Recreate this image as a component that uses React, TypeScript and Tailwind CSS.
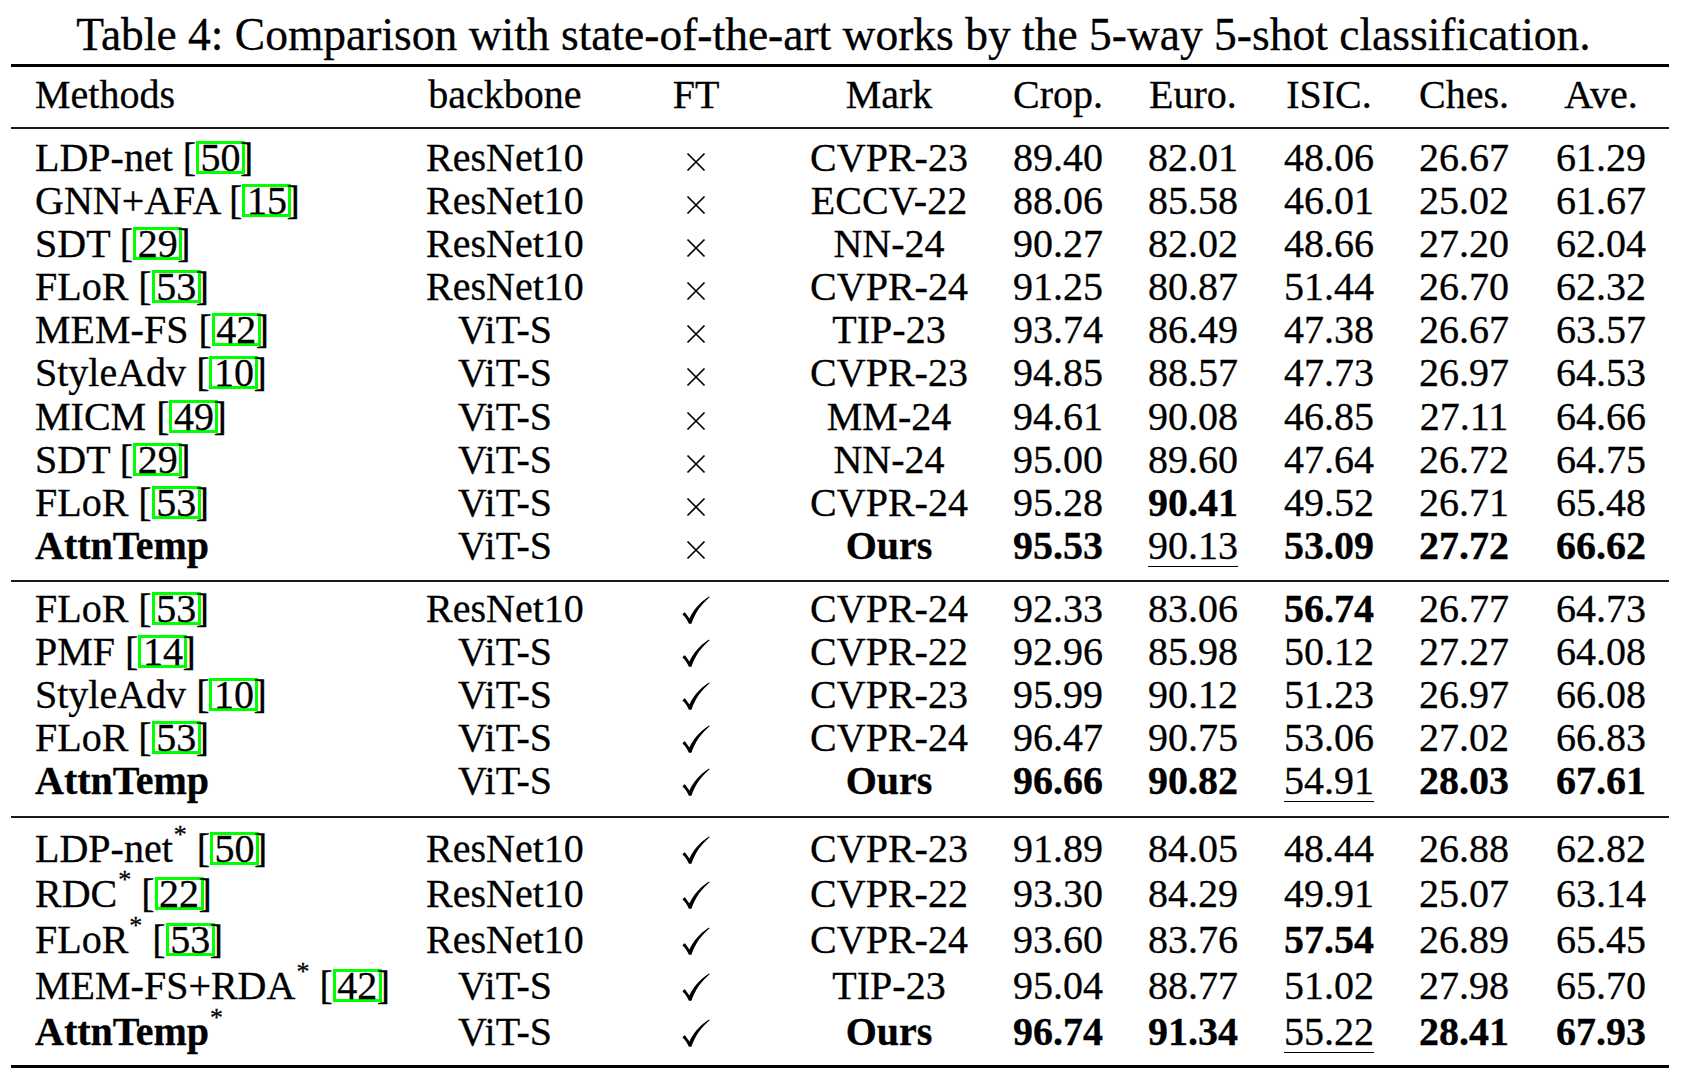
import React from 'react';

type Row = {
  name: string;
  cite?: string;
  star?: boolean;
  bold?: boolean;
  backbone: string;
  ft: boolean;
  mark: string;
  vals: string[];
};

// "b:" = bold cell, "u:" = underlined cell
const sections: Row[][] = [
  [
    { name: 'LDP-net', cite: '50', backbone: 'ResNet10', ft: false, mark: 'CVPR-23', vals: ['89.40', '82.01', '48.06', '26.67', '61.29'] },
    { name: 'GNN+AFA', cite: '15', backbone: 'ResNet10', ft: false, mark: 'ECCV-22', vals: ['88.06', '85.58', '46.01', '25.02', '61.67'] },
    { name: 'SDT', cite: '29', backbone: 'ResNet10', ft: false, mark: 'NN-24', vals: ['90.27', '82.02', '48.66', '27.20', '62.04'] },
    { name: 'FLoR', cite: '53', backbone: 'ResNet10', ft: false, mark: 'CVPR-24', vals: ['91.25', '80.87', '51.44', '26.70', '62.32'] },
    { name: 'MEM-FS', cite: '42', backbone: 'ViT-S', ft: false, mark: 'TIP-23', vals: ['93.74', '86.49', '47.38', '26.67', '63.57'] },
    { name: 'StyleAdv', cite: '10', backbone: 'ViT-S', ft: false, mark: 'CVPR-23', vals: ['94.85', '88.57', '47.73', '26.97', '64.53'] },
    { name: 'MICM', cite: '49', backbone: 'ViT-S', ft: false, mark: 'MM-24', vals: ['94.61', '90.08', '46.85', '27.11', '64.66'] },
    { name: 'SDT', cite: '29', backbone: 'ViT-S', ft: false, mark: 'NN-24', vals: ['95.00', '89.60', '47.64', '26.72', '64.75'] },
    { name: 'FLoR', cite: '53', backbone: 'ViT-S', ft: false, mark: 'CVPR-24', vals: ['95.28', 'b:90.41', '49.52', '26.71', '65.48'] },
    { name: 'AttnTemp', bold: true, backbone: 'ViT-S', ft: false, mark: 'b:Ours', vals: ['b:95.53', 'u:90.13', 'b:53.09', 'b:27.72', 'b:66.62'] },
  ],
  [
    { name: 'FLoR', cite: '53', backbone: 'ResNet10', ft: true, mark: 'CVPR-24', vals: ['92.33', '83.06', 'b:56.74', '26.77', '64.73'] },
    { name: 'PMF', cite: '14', backbone: 'ViT-S', ft: true, mark: 'CVPR-22', vals: ['92.96', '85.98', '50.12', '27.27', '64.08'] },
    { name: 'StyleAdv', cite: '10', backbone: 'ViT-S', ft: true, mark: 'CVPR-23', vals: ['95.99', '90.12', '51.23', '26.97', '66.08'] },
    { name: 'FLoR', cite: '53', backbone: 'ViT-S', ft: true, mark: 'CVPR-24', vals: ['96.47', '90.75', '53.06', '27.02', '66.83'] },
    { name: 'AttnTemp', bold: true, backbone: 'ViT-S', ft: true, mark: 'b:Ours', vals: ['b:96.66', 'b:90.82', 'u:54.91', 'b:28.03', 'b:67.61'] },
  ],
  [
    { name: 'LDP-net', star: true, cite: '50', backbone: 'ResNet10', ft: true, mark: 'CVPR-23', vals: ['91.89', '84.05', '48.44', '26.88', '62.82'] },
    { name: 'RDC', star: true, cite: '22', backbone: 'ResNet10', ft: true, mark: 'CVPR-22', vals: ['93.30', '84.29', '49.91', '25.07', '63.14'] },
    { name: 'FLoR', star: true, cite: '53', backbone: 'ResNet10', ft: true, mark: 'CVPR-24', vals: ['93.60', '83.76', 'b:57.54', '26.89', '65.45'] },
    { name: 'MEM-FS+RDA', star: true, cite: '42', backbone: 'ViT-S', ft: true, mark: 'TIP-23', vals: ['95.04', '88.77', '51.02', '27.98', '65.70'] },
    { name: 'AttnTemp', star: true, bold: true, backbone: 'ViT-S', ft: true, mark: 'b:Ours', vals: ['b:96.74', 'b:91.34', 'u:55.22', 'b:28.41', 'b:67.93'] },
  ],
];

const cols = 'grid grid-cols-[399px_190px_192px_194px_144px_126px_146px_124px_150px] items-baseline whitespace-nowrap';

const Cite = ({ n }: { n: string }) => (
  <>
    [
    <span className="mr-[-5px] inline-block border-[3px] border-[#00ff00] px-[1.5px] leading-[27px]">{n}</span>]
  </>
);

const Check = () => (
  <svg viewBox="0 0 28 28" className="inline-block h-[28px] w-[28px] align-[-2px]">
    <path
      d="M0.5 18.4 C1.2 17.4 2 16.6 2.9 16.2 L7.4 22.4 C11 14.5 17 6.8 27 0.4 L27.6 1.2 C19.5 8 13.2 16.5 9.4 27.8 L6.9 27.8 C5.4 24.2 3.4 20.6 0.5 18.4 Z"
      fill="black"
    />
  </svg>
);

const Cross = () => (
  <svg viewBox="0 0 20 20" className="inline-block h-[20px] w-[20px] align-[-1px]">
    <path d="M1.5 1.5 L18.5 18.5 M18.5 1.5 L1.5 18.5" stroke="black" strokeWidth="1.7" fill="none" />
  </svg>
);

const Value = ({ v }: { v: string }) => {
  if (v.startsWith('b:')) return <span className="font-bold">{v.slice(2)}</span>;
  if (v.startsWith('u:'))
    return <span className="inline-block border-b-[1.5px] border-black leading-[40px]">{v.slice(2)}</span>;
  return <span>{v}</span>;
};

const Rule = ({ heavy, className }: { heavy?: boolean; className: string }) => (
  <div className={`${heavy ? 'h-[3px] bg-black' : 'h-[2px] bg-[#1a1a1a]'} w-[1658px] ${className}`} />
);

const TableRow = ({ r, tall }: { r: Row; tall?: boolean }) => (
  <div className={`${cols} ${tall ? 'h-[45.8px] leading-[45.8px]' : 'h-[43.1px] leading-[43.1px]'}`}>
    <div className="pl-[24px]">
      <span className={r.bold ? 'font-bold' : ''}>{r.name}</span>
      {r.star && <span className="relative top-[-19px] ml-[1px] text-[26px] leading-none">*</span>}
      {r.cite && (
        <>
          {' '}
          <Cite n={r.cite} />
        </>
      )}
    </div>
    <div className="text-center">{r.backbone}</div>
    <div className="text-center">{r.ft ? <Check /> : <Cross />}</div>
    <div className="text-center">
      <Value v={r.mark} />
    </div>
    {r.vals.map((v, i) => (
      <div key={i} className="text-center">
        <Value v={v} />
      </div>
    ))}
  </div>
);

const App = () => {
  return (
    <div className="h-[1087px] w-[1681px] overflow-hidden bg-white font-['Liberation_Serif','Times_New_Roman',serif] text-black [-webkit-text-stroke:0.3px_black]">
      <div className="whitespace-nowrap pt-[9px] pr-[14px] text-center text-[45.5px] leading-[52px]">
        Table 4: Comparison with state-of-the-art works by the 5-way 5-shot classification.
      </div>

      <div className="ml-[11px] text-[40px]">
        <Rule heavy className="mt-[3px]" />

        <div className={`${cols} mt-[6px] h-[43px] leading-[43px]`}>
          <div className="pl-[24px]">Methods</div>
          <div className="text-center">backbone</div>
          <div className="text-center">FT</div>
          <div className="text-center">Mark</div>
          <div className="text-center">Crop.</div>
          <div className="text-center">Euro.</div>
          <div className="text-center">ISIC.</div>
          <div className="text-center">Ches.</div>
          <div className="text-center">Ave.</div>
        </div>
        <Rule className="mt-[11px]" />

        <div className="mt-[7px]">
          {sections[0].map((r, i) => (
            <TableRow key={i} r={r} />
          ))}
        </div>
        <Rule className="mt-[13px]" />

        <div className="mt-[5px]">
          {sections[1].map((r, i) => (
            <TableRow key={i} r={r} />
          ))}
        </div>
        <Rule className="mt-[13.5px]" />

        <div className="mt-[7.6px]">
          {sections[2].map((r, i) => (
            <TableRow key={i} r={r} tall />
          ))}
        </div>
        <Rule heavy className="mt-[10.7px]" />
      </div>
    </div>
  );
};

export default App;
